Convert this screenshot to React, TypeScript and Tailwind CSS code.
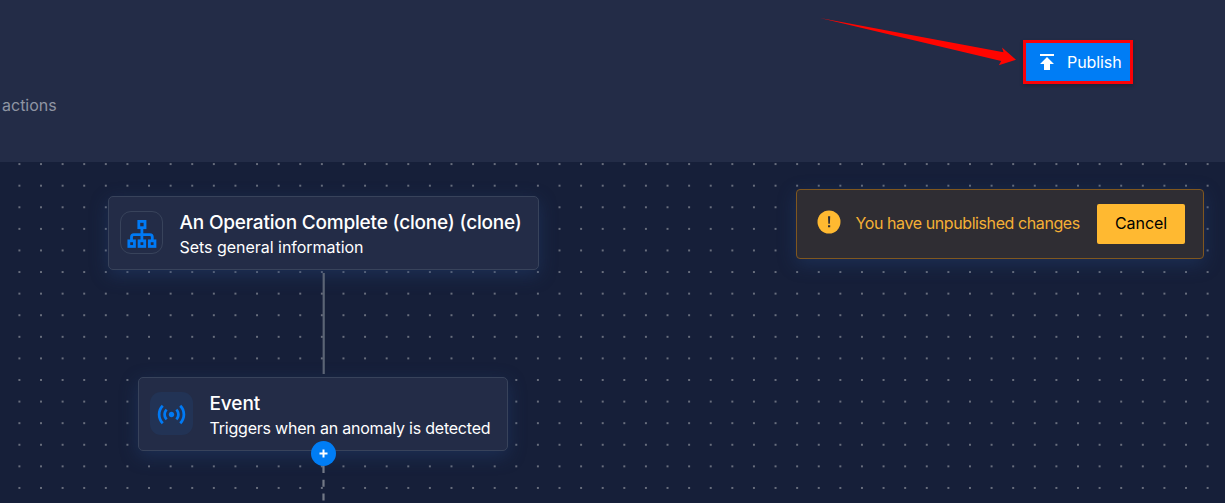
import type { ReactNode } from "react";
import { MdPublish, MdSensors } from "react-icons/md";

function SitemapIcon() {
  return (
    <svg className="mt-[3px] shrink-0" width="30" height="28" viewBox="0 0 30 28" fill="none" stroke="#007af5" strokeWidth="2.8">
      <rect x="11.8" y="1.4" width="6.2" height="6.3" />
      <rect x="1.85" y="20.85" width="5.6" height="5.6" />
      <rect x="12.1" y="20.85" width="5.6" height="5.6" />
      <rect x="22.35" y="20.85" width="5.6" height="5.6" />
      <path d="M14.9 8v12M4.5 20v-3q0-2.4 2.4-2.4h16q2.4 0 2.4 2.4v3" />
    </svg>
  );
}

type NodeProps = {
  className: string;
  iconClass: string;
  icon: ReactNode;
  title: ReactNode;
  subtitle: ReactNode;
};

function FlowNode({ className, iconClass, icon, title, subtitle }: NodeProps) {
  return (
    <div
      className={`absolute flex h-[74px] rounded-[5px] border border-[#38435b] bg-[#232c47] shadow-[0_5px_18px_rgba(35,65,115,0.48)] ${className}`}
    >
      <div className={`mt-[14px] ml-[11px] flex size-[43px] shrink-0 items-center justify-center rounded-[11px] ${iconClass}`}>
        {icon}
      </div>
      <div className="ml-[16.5px] pt-[13px] whitespace-nowrap text-white">
        <div className="h-[25px] text-[19px] leading-[25px] font-medium">{title}</div>
        <div className="text-[16px] leading-[25px]">{subtitle}</div>
      </div>
    </div>
  );
}

function Canvas() {
  return (
    <main className="relative h-[341px] overflow-hidden bg-[#161f39]">
      <svg className="absolute inset-0 size-full">
        <defs>
          <pattern id="dots" x="8.6" y="-8.7" width="21.604" height="21.59" patternUnits="userSpaceOnUse">
            <circle cx="10.8" cy="10.8" r="0.92" fill="#8d929c" />
          </pattern>
        </defs>
        <rect width="100%" height="100%" fill="url(#dots)" />
      </svg>

      <FlowNode
        className="top-[34px] left-[108px] w-[431px]"
        iconClass="border border-[#38435b]"
        icon={<SitemapIcon />}
        title={<span className="tracking-[-0.19px]">An Operation Complete (clone) (clone)</span>}
        subtitle={<span className="tracking-[-0.03px]">Sets general information</span>}
      />
      <FlowNode
        className="top-[215px] left-[138px] w-[370px]"
        iconClass="bg-[#223355]"
        icon={<MdSensors className="mt-[2px] size-[33px] shrink-0 text-[#007af5]" />}
        title={<span className="tracking-[-0.1px]">Event</span>}
        subtitle={<span className="tracking-[-0.21px]">Triggers when an anomaly is detected</span>}
      />

      <svg className="absolute inset-0 size-full" fill="none" stroke="#737987" strokeWidth="2.2">
        <path d="M323.7 111v101" stroke="#5b6475" />
        <path d="M323.5 304v37" strokeDasharray="7 6.7" />
      </svg>
      <div className="absolute top-[279px] left-[311px] flex size-[25px] items-center justify-center rounded-full bg-[#007df5]">
        <svg width="9" height="9" viewBox="0 0 9 9" stroke="white" strokeWidth="2">
          <path d="M4.5 .5v8M.5 4.5h8" />
        </svg>
      </div>

      <div className="absolute top-[27px] left-[796px] flex h-[70px] w-[408px] items-center rounded-[4px] border border-[#80571f] bg-[#2f2d33] shadow-[0_5px_18px_rgba(35,65,115,0.48)]">
        <svg className="mb-[4px] ml-[20px] shrink-0" width="24" height="24" viewBox="0 0 24 24">
          <circle cx="12" cy="12" r="11.5" fill="#ffb931" />
          <path d="M11 6.2h2.2l-.3 7.6h-1.6zM11 15.3h2.2v2H11z" fill="#2f2d33" />
        </svg>
        <span className="mb-[2px] ml-[14.5px] w-[225.5px] shrink-0 text-[16px] tracking-[-0.41px] whitespace-nowrap text-[#f5b035]">
          You have unpublished changes
        </span>
        <button className="ml-[16px] h-10 w-[88px] rounded-[2px] bg-[#ffb931] pb-[2px] text-[16px] tracking-[-0.05px] text-black">
          Cancel
        </button>
      </div>
    </main>
  );
}

export default function App() {
  return (
    <div className="relative h-[503px] w-[1225px] overflow-hidden bg-[#161f39] font-['Inter','Noto_Sans',sans-serif]">
      <header className="flex h-[162px] justify-between bg-[#232c47] pr-[92px] pl-[2px]">
        <p className="mt-[94px] text-[16px] leading-[22px] text-[#8f95a3]">actions</p>
        <button className="mt-10 flex h-[44px] w-[110px] items-center border-3 border-[#fb0207] bg-[#007df5] pl-[9px] text-[16px] text-white shadow-[0_2px_4px_rgba(0,0,0,0.2)]">
          <MdPublish className="size-6 shrink-0" />
          <span className="ml-[8px] tracking-[-0.08px]">Publish</span>
        </button>
      </header>
      <Canvas />
      <svg className="absolute top-0 left-[810px]" width="210" height="80" viewBox="0 0 210 80">
        <path d="M10 18L193.5 52.2L192 47.5L206 59.7L188.8 65.3L191.2 61Z" fill="#ff0500" />
      </svg>
    </div>
  );
}
